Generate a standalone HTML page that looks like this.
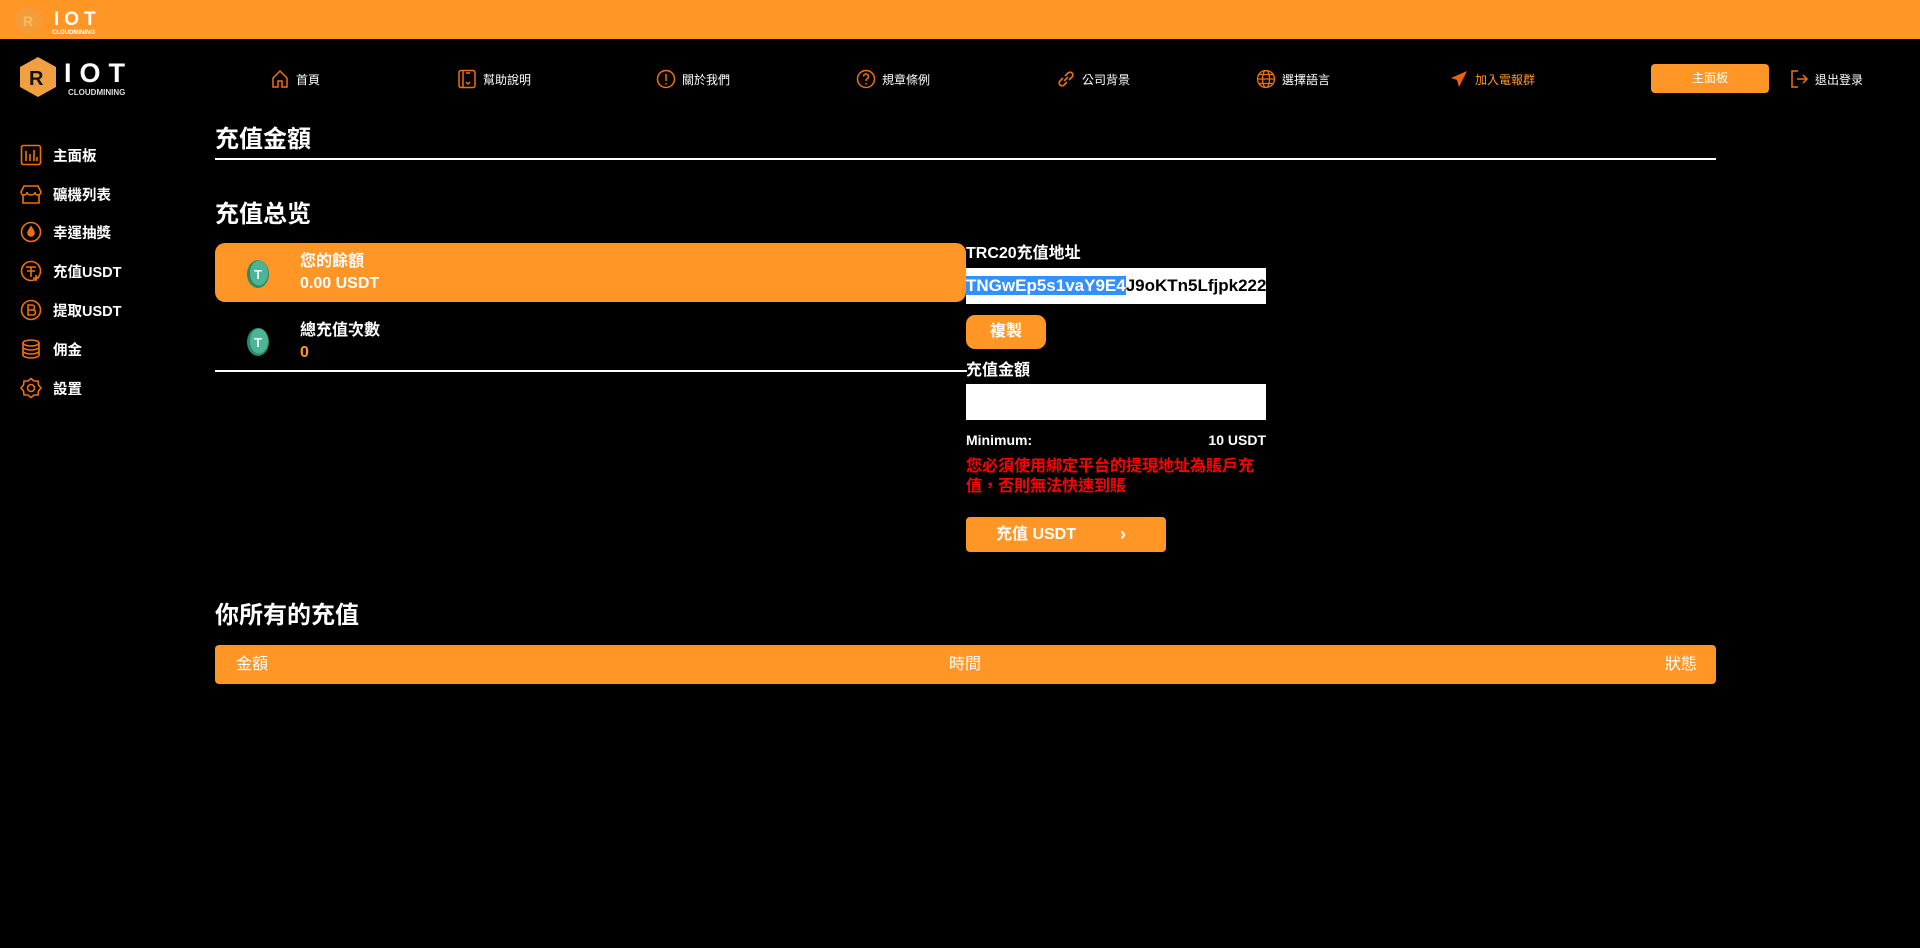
<!DOCTYPE html>
<html><head><meta charset="utf-8">
<style>
*{margin:0;padding:0;box-sizing:border-box}
body{width:1920px;height:948px;background:#000;color:#fff;font-family:"Liberation Sans","Noto Sans CJK TC",sans-serif;position:relative;overflow:hidden}
.a{position:absolute}
.top{left:0;top:0;width:1920px;height:39px;background:#ff9626}
.nav{top:69px;font-size:12px;display:flex;align-items:center;gap:6px;color:#fff}
.nav svg{width:20px;height:20px}
.side{left:20px;font-size:14.5px;font-weight:bold;display:flex;align-items:center;gap:11px}
.side svg{width:22px;height:22px}
h2{position:absolute;font-size:24px;font-weight:bold}
.lbl{font-size:16px;font-weight:bold;line-height:1.2}
</style></head><body>
<div class="a top"></div>
<svg class="a" style="left:12px;top:4px" width="110" height="32" viewBox="0 0 110 32">
<polygon points="16,2 29,9 29,23 16,30 3,23 3,9" fill="#f0a040" opacity=".7"/>
<text x="11" y="22" font-size="14" font-weight="bold" fill="#ffbb66" font-family="Liberation Sans">R</text>
<text x="42" y="21" font-size="19" font-weight="bold" fill="#fff" font-family="Liberation Sans" letter-spacing="5">IOT</text>
<text x="40" y="30" font-size="6" font-weight="bold" fill="#fff" font-family="Liberation Sans">CLOUDMINING</text>
</svg>
<svg class="a" style="left:18px;top:55px" width="125" height="44" viewBox="0 0 125 44">
<polygon points="20,2 38,12 38,32 20,42 2,32 2,12" fill="#f0a040"/>
<text x="11" y="30" font-size="20" font-weight="bold" fill="#111" font-family="Liberation Sans">R</text>
<text x="46" y="27" font-size="27" font-weight="bold" fill="#fff" font-family="Liberation Sans" letter-spacing="8">IOT</text>
<text x="50" y="40" font-size="8" font-weight="bold" fill="#ddd" font-family="Liberation Sans">CLOUDMINING</text>
</svg>

<div class="a nav" style="left:270px"><svg viewBox="0 0 20 20" fill="none" stroke="#f07010" stroke-width="1.5"><path d="M3 9 L10 2 L17 9 V18 H12 V12 H8 V18 H3 Z"/></svg>首頁</div>
<div class="a nav" style="left:457px"><svg viewBox="0 0 20 20" fill="none" stroke="#f07010" stroke-width="1.5"><rect x="2" y="1.5" width="16" height="17" rx="2"/><path d="M6 2v16M9 4h4M9 13l2 2 2-2"/></svg>幫助說明</div>
<div class="a nav" style="left:656px"><svg viewBox="0 0 20 20" fill="none" stroke="#f07010" stroke-width="1.5"><circle cx="10" cy="10" r="8.5"/><path d="M10 5v7M10 14v1.5"/></svg>關於我們</div>
<div class="a nav" style="left:856px"><svg viewBox="0 0 20 20" fill="none" stroke="#f07010" stroke-width="1.5"><circle cx="10" cy="10" r="8.5"/><path d="M7.5 7.5a2.5 2.5 0 1 1 3.5 2.3c-1 .5-1 1.2-1 2.2M10 14v1.5"/></svg>規章條例</div>
<div class="a nav" style="left:1056px"><svg viewBox="0 0 20 20" fill="none" stroke="#f07010" stroke-width="1.6"><path d="M8 12l4-4M7 9l-3 3a2.8 2.8 0 0 0 4 4l3-3M13 11l3-3a2.8 2.8 0 0 0-4-4L9 7"/></svg>公司背景</div>
<div class="a nav" style="left:1256px"><svg viewBox="0 0 20 20" fill="none" stroke="#f07010" stroke-width="1.3"><circle cx="10" cy="10" r="8.5"/><ellipse cx="10" cy="10" rx="3.5" ry="8.5"/><path d="M1.5 10h17M3 5.5h14M3 14.5h14"/></svg>選擇語言</div>
<div class="a nav" style="left:1449px;color:#ff9626"><svg viewBox="0 0 20 20"><path d="M18 2 L2 9 L8 11 L10 18 Z" fill="#f06010"/></svg>加入電報群</div>
<div class="a" style="left:1651px;top:64px;width:118px;height:29px;background:#ff9626;border-radius:4px;font-size:12px;text-align:center;line-height:29px;color:#fff">主面板</div>
<div class="a nav" style="left:1789px"><svg viewBox="0 0 20 20" fill="none" stroke="#f07010" stroke-width="1.5"><path d="M9 2H3v16h6M8 10h10M14 6l4 4-4 4"/></svg>退出登录</div>

<div class="a side" style="top:144px"><svg viewBox="0 0 22 22" fill="none" stroke="#f07010" stroke-width="1.6"><rect x="1.5" y="1.5" width="19" height="19" rx="2"/><path d="M6 7v10M10 10v7M14 6v11M17 13v4"/></svg>主面板</div>
<div class="a side" style="top:183px"><svg viewBox="0 0 22 22" fill="none" stroke="#f07010" stroke-width="1.6"><path d="M4 3h14l3 6c0 2-2 3-3.3 3S15 11 15 9c0 2-2 3-4 3s-4-1-4-3c0 2-1.5 3-3 3S1 11 1 9z M3 12v8h16v-8"/></svg>礦機列表</div>
<div class="a side" style="top:221px"><svg viewBox="0 0 22 22" fill="none" stroke="#f07010" stroke-width="1.6"><circle cx="11" cy="11" r="9.5"/><path d="M11 6c-1 2-3 4-3 6a3 3 0 0 0 6 0c0-2-2-4-3-6z" fill="#f07010"/></svg>幸運抽獎</div>
<div class="a side" style="top:260px"><svg viewBox="0 0 22 22" fill="none" stroke="#f07010" stroke-width="1.6"><circle cx="11" cy="11" r="9.5"/><path d="M6 7h10M11 7v10M7 11h8"/><path d="M16 15v6M13 18h6"/></svg>充值USDT</div>
<div class="a side" style="top:299px"><svg viewBox="0 0 22 22" fill="none" stroke="#f07010" stroke-width="1.6"><circle cx="11" cy="11" r="9.5"/><path d="M8 6h4a2.5 2.5 0 0 1 0 5H8zM8 11h5a2.5 2.5 0 0 1 0 5H8zM8 6v10"/></svg>提取USDT</div>
<div class="a side" style="top:338px"><svg viewBox="0 0 22 22" fill="none" stroke="#f07010" stroke-width="1.6"><ellipse cx="11" cy="5" rx="8" ry="3"/><path d="M3 5v12c0 1.7 3.6 3 8 3s8-1.3 8-3V5M3 9c0 1.7 3.6 3 8 3s8-1.3 8-3M3 13c0 1.7 3.6 3 8 3s8-1.3 8-3"/></svg>佣金</div>
<div class="a side" style="top:377px"><svg viewBox="0 0 22 22" fill="none" stroke="#f07010" stroke-width="1.6"><path d="M11 1.5l3 2.5 4 0 .5 4 2.5 3-2.5 3-.5 4-4 0-3 2.5-3-2.5-4 0-.5-4L1 11l2.5-3 .5-4 4 0z"/><circle cx="11" cy="11" r="3.5"/></svg>設置</div>

<h2 style="left:215px;top:119px">充值金額</h2>
<div class="a" style="left:215px;top:158px;width:1501px;height:2px;background:#fff"></div>
<h2 style="left:215px;top:194px">充值总览</h2>

<div class="a" style="left:215px;top:243px;width:751px;height:59px;background:#ff9626;border-radius:10px"></div>
<svg class="a" style="left:245px;top:258px" width="26" height="32" viewBox="0 0 26 32"><ellipse cx="13" cy="16" rx="11" ry="14" fill="#2a8a6a"/><ellipse cx="14" cy="15" rx="9" ry="12.5" fill="#4cb596"/><text x="9" y="21" font-size="13" font-weight="bold" fill="#fff" font-family="Liberation Sans">T</text></svg>
<div class="a lbl" style="left:300px;top:252px">您的餘額</div>
<div class="a lbl" style="left:300px;top:274px">0.00 USDT</div>
<svg class="a" style="left:245px;top:326px" width="26" height="32" viewBox="0 0 26 32"><ellipse cx="13" cy="16" rx="11" ry="14" fill="#2a8a6a"/><ellipse cx="14" cy="15" rx="9" ry="12.5" fill="#4cb596"/><text x="9" y="21" font-size="13" font-weight="bold" fill="#fff" font-family="Liberation Sans">T</text></svg>
<div class="a lbl" style="left:300px;top:321px">總充值次數</div>
<div class="a lbl" style="left:300px;top:343px;color:#ff9626">0</div>
<div class="a" style="left:215px;top:370px;width:752px;height:2px;background:#fff"></div>

<div class="a lbl" style="left:966px;top:244px">TRC20充值地址</div>
<div class="a" style="left:966px;top:268px;width:300px;height:36px;background:#fff;overflow:hidden;white-space:nowrap;font-size:17px;font-weight:bold;line-height:36px;color:#000"><span style="background:#3390ff;color:#fff">TNGwEp5s1vaY9E4</span>J9oKTn5Lfjpk2229</div>
<div class="a" style="left:966px;top:315px;width:80px;height:34px;background:#ff9626;border-radius:9px;font-size:16px;font-weight:bold;text-align:center;line-height:34px">複製</div>
<div class="a lbl" style="left:966px;top:361px">充值金額</div>
<div class="a" style="left:966px;top:384px;width:300px;height:36px;background:#fff"></div>
<div class="a" style="left:966px;top:432px;font-size:14px;font-weight:bold">Minimum:</div>
<div class="a" style="left:1166px;top:432px;width:100px;text-align:right;font-size:14px;font-weight:bold">10 USDT</div>
<div class="a" style="left:966px;top:457px;width:300px;font-size:16px;line-height:20px;font-weight:bold;color:#f00">您必須使用綁定平台的提現地址為賬戶充值，否則無法快速到賬</div>
<div class="a" style="left:966px;top:517px;width:200px;height:35px;background:#ff9626;border-radius:4px;font-size:16px;font-weight:bold;line-height:35px"><span style="position:absolute;left:30px">充值 USDT</span><span style="position:absolute;left:154px;font-size:18px">›</span></div>

<h2 style="left:215px;top:595px">你所有的充值</h2>
<div class="a" style="left:215px;top:645px;width:1501px;height:39px;background:#ff9626;border-radius:4px;font-size:16px;line-height:39px">
<span class="a" style="left:21px">金額</span><span class="a" style="left:734px">時間</span><span class="a" style="right:19px">狀態</span></div>
</body></html>
